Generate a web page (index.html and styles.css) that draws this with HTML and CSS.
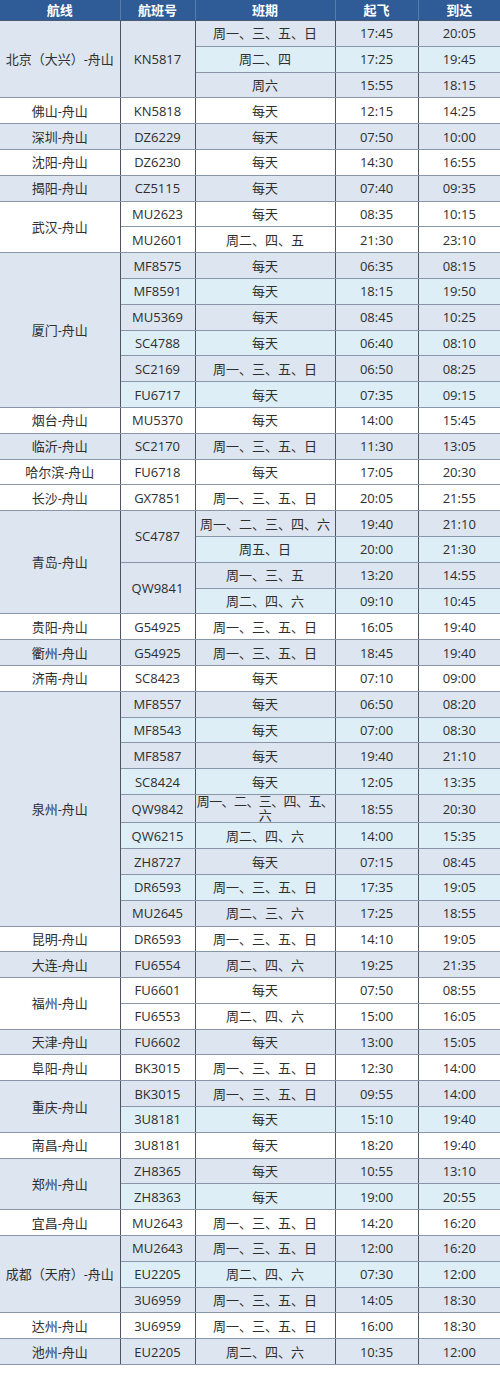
FILE: index.html
```html
<!DOCTYPE html>
<html lang="zh-CN">
<head>
<meta charset="utf-8">
<title>航班时刻表</title>
<link rel="stylesheet" href="styles.css">
</head>
<body>
<table class="tt">
<colgroup><col class="c1"><col class="c2"><col class="c3"><col class="c4"><col class="c5"></colgroup>
<thead>
<tr><th>航线</th><th>航班号</th><th>班期</th><th>起飞</th><th>到达</th></tr>
</thead>
<tbody>
<tr class="a"><td class="m" rowspan="3">北京（大兴）-舟山</td><td class="m" rowspan="3">KN5817</td><td>周一、三、五、日</td><td>17:45</td><td>20:05</td></tr>
<tr class="b"><td>周二、四</td><td>17:25</td><td>19:45</td></tr>
<tr class="a"><td>周六</td><td>15:55</td><td>18:15</td></tr>
<tr class="w"><td>佛山-舟山</td><td>KN5818</td><td>每天</td><td>12:15</td><td>14:25</td></tr>
<tr class="a"><td>深圳-舟山</td><td>DZ6229</td><td>每天</td><td>07:50</td><td>10:00</td></tr>
<tr class="w"><td>沈阳-舟山</td><td>DZ6230</td><td>每天</td><td>14:30</td><td>16:55</td></tr>
<tr class="a"><td>揭阳-舟山</td><td>CZ5115</td><td>每天</td><td>07:40</td><td>09:35</td></tr>
<tr class="w"><td rowspan="2">武汉-舟山</td><td>MU2623</td><td>每天</td><td>08:35</td><td>10:15</td></tr>
<tr class="w"><td>MU2601</td><td>周二、四、五</td><td>21:30</td><td>23:10</td></tr>
<tr class="a"><td class="m" rowspan="6">厦门-舟山</td><td>MF8575</td><td>每天</td><td>06:35</td><td>08:15</td></tr>
<tr class="b"><td>MF8591</td><td>每天</td><td>18:15</td><td>19:50</td></tr>
<tr class="a"><td>MU5369</td><td>每天</td><td>08:45</td><td>10:25</td></tr>
<tr class="b"><td>SC4788</td><td>每天</td><td>06:40</td><td>08:10</td></tr>
<tr class="a"><td>SC2169</td><td>周一、三、五、日</td><td>06:50</td><td>08:25</td></tr>
<tr class="b"><td>FU6717</td><td>每天</td><td>07:35</td><td>09:15</td></tr>
<tr class="w"><td>烟台-舟山</td><td>MU5370</td><td>每天</td><td>14:00</td><td>15:45</td></tr>
<tr class="a"><td>临沂-舟山</td><td>SC2170</td><td>周一、三、五、日</td><td>11:30</td><td>13:05</td></tr>
<tr class="w"><td>哈尔滨-舟山</td><td>FU6718</td><td>每天</td><td>17:05</td><td>20:30</td></tr>
<tr class="w"><td>长沙-舟山</td><td>GX7851</td><td>周一、三、五、日</td><td>20:05</td><td>21:55</td></tr>
<tr class="a"><td class="m" rowspan="4">青岛-舟山</td><td class="m" rowspan="2">SC4787</td><td>周一、二、三、四、六</td><td>19:40</td><td>21:10</td></tr>
<tr class="b"><td>周五、日</td><td>20:00</td><td>21:30</td></tr>
<tr class="a"><td class="m" rowspan="2">QW9841</td><td>周一、三、五</td><td>13:20</td><td>14:55</td></tr>
<tr class="b"><td>周二、四、六</td><td>09:10</td><td>10:45</td></tr>
<tr class="w"><td>贵阳-舟山</td><td>G54925</td><td>周一、三、五、日</td><td>16:05</td><td>19:40</td></tr>
<tr class="a"><td>衢州-舟山</td><td>G54925</td><td>周一、三、五、日</td><td>18:45</td><td>19:40</td></tr>
<tr class="w"><td>济南-舟山</td><td>SC8423</td><td>每天</td><td>07:10</td><td>09:00</td></tr>
<tr class="a"><td class="m" rowspan="9">泉州-舟山</td><td>MF8557</td><td>每天</td><td>06:50</td><td>08:20</td></tr>
<tr class="b"><td>MF8543</td><td>每天</td><td>07:00</td><td>08:30</td></tr>
<tr class="a"><td>MF8587</td><td>每天</td><td>19:40</td><td>21:10</td></tr>
<tr class="b"><td>SC8424</td><td>每天</td><td>12:05</td><td>13:35</td></tr>
<tr class="a tall"><td>QW9842</td><td class="wrap">周一、二、三、四、五、<br>六</td><td>18:55</td><td>20:30</td></tr>
<tr class="b"><td>QW6215</td><td>周二、四、六</td><td>14:00</td><td>15:35</td></tr>
<tr class="a"><td>ZH8727</td><td>每天</td><td>07:15</td><td>08:45</td></tr>
<tr class="b"><td>DR6593</td><td>周一、三、五、日</td><td>17:35</td><td>19:05</td></tr>
<tr class="a"><td>MU2645</td><td>周二、三、六</td><td>17:25</td><td>18:55</td></tr>
<tr class="w"><td>昆明-舟山</td><td>DR6593</td><td>周一、三、五、日</td><td>14:10</td><td>19:05</td></tr>
<tr class="a"><td>大连-舟山</td><td>FU6554</td><td>周二、四、六</td><td>19:25</td><td>21:35</td></tr>
<tr class="w"><td rowspan="2">福州-舟山</td><td>FU6601</td><td>每天</td><td>07:50</td><td>08:55</td></tr>
<tr class="w"><td>FU6553</td><td>周二、四、六</td><td>15:00</td><td>16:05</td></tr>
<tr class="a"><td>天津-舟山</td><td>FU6602</td><td>每天</td><td>13:00</td><td>15:05</td></tr>
<tr class="w"><td>阜阳-舟山</td><td>BK3015</td><td>周一、三、五、日</td><td>12:30</td><td>14:00</td></tr>
<tr class="a"><td class="m" rowspan="2">重庆-舟山</td><td>BK3015</td><td>周一、三、五、日</td><td>09:55</td><td>14:00</td></tr>
<tr class="b"><td>3U8181</td><td>每天</td><td>15:10</td><td>19:40</td></tr>
<tr class="w"><td>南昌-舟山</td><td>3U8181</td><td>每天</td><td>18:20</td><td>19:40</td></tr>
<tr class="a"><td class="m" rowspan="2">郑州-舟山</td><td>ZH8365</td><td>每天</td><td>10:55</td><td>13:10</td></tr>
<tr class="b"><td>ZH8363</td><td>每天</td><td>19:00</td><td>20:55</td></tr>
<tr class="w"><td>宜昌-舟山</td><td>MU2643</td><td>周一、三、五、日</td><td>14:20</td><td>16:20</td></tr>
<tr class="a"><td class="m" rowspan="3">成都（天府）-舟山</td><td>MU2643</td><td>周一、三、五、日</td><td>12:00</td><td>16:20</td></tr>
<tr class="b"><td>EU2205</td><td>周二、四、六</td><td>07:30</td><td>12:00</td></tr>
<tr class="a"><td>3U6959</td><td>周一、三、五、日</td><td>14:05</td><td>18:30</td></tr>
<tr class="w"><td>达州-舟山</td><td>3U6959</td><td>周一、三、五、日</td><td>16:00</td><td>18:30</td></tr>
<tr class="a"><td>池州-舟山</td><td>EU2205</td><td>周二、四、六</td><td>10:35</td><td>12:00</td></tr>
</tbody>
</table>
</body>
</html>
```

FILE: styles.css
```css
html, body {
  margin: 0;
  padding: 0;
  background: #ffffff;
}

body {
  font-family: "Open Sans", "Noto Sans CJK SC", sans-serif;
  font-size: 13px;
  color: #2e2e2e;
}

.tt {
  width: 500px;
  border-collapse: collapse;
  table-layout: fixed;
}

.c1 { width: 120px; }
.c2 { width: 75px; }
.c3 { width: 140px; }
.c4 { width: 83px; }
.c5 { width: 82px; }

.tt th {
  height: 20px;
  padding: 0;
  background: #2f5b97;
  color: #ffffff;
  font-weight: bold;
  font-size: 13px;
  line-height: 14px;
  text-align: center;
  border-left: 1px solid #5b7cab;
  border-bottom: 1px solid #4a5a70;
}

.tt th:first-child { border-left: none; }

.tt td {
  height: 24.8px;
  padding: 0;
  text-align: center;
  vertical-align: middle;
  line-height: 14px;
  white-space: nowrap;
  border: 1px solid #8896a8;
  border-left-color: #4d5561;
  border-right-color: #4d5561;
}

.tt tr td:first-child { border-left: none; }
.tt tr td:last-child { border-right: none; }

.tt td.wrap {
  line-height: 13.7px;
  letter-spacing: -0.6px;
}

.tt tr.tall td { height: 27.4px; }

.tt tr.a td { background: #dde5f0; }
.tt tr.b td { background: #ddeef6; }
.tt tr.w td { background: #ffffff; }
.tt tr td.m { background: #dde5f0; }
```
